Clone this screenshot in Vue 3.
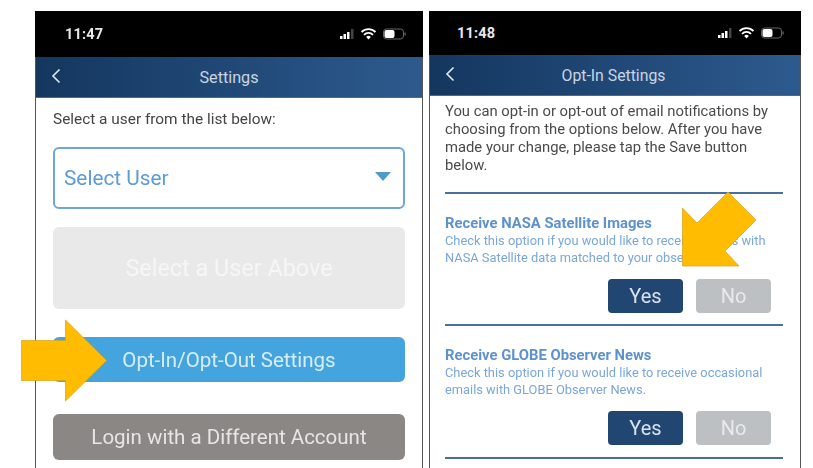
<template>
  <div class="page">
    <!-- left phone -->
    <div class="phone phone-a">
      <div class="status">
        <span class="time">11:47</span>
        <svg class="status-icons" width="66" height="12" viewBox="0 0 66 12">
          <rect x="0" y="8" width="2.5" height="3" fill="#fff" />
          <rect x="3.5" y="6" width="2.5" height="5" fill="#fff" />
          <rect x="7" y="4" width="2.5" height="7" fill="#fff" />
          <rect x="11" y="1" width="2.5" height="10" fill="#444" />
          <path d="M21.5 4a10 10 0 0 1 14 0M24 6.8a6.4 6.4 0 0 1 9 0" fill="none" stroke="#fff" stroke-width="1.8" />
          <path d="M26.2 9a3.2 3.2 0 0 1 4.6 0l-2.3 2.5z" fill="#fff" />
          <rect x="43.5" y="1" width="20" height="10" rx="3" fill="none" stroke="#666" />
          <rect x="44.5" y="2" width="10" height="8" rx="2" fill="#fff" />
          <rect x="64.5" y="4.5" width="1.2" height="3" fill="#666" />
        </svg>
      </div>
      <div class="nav">
        <svg class="back" width="10" height="16" viewBox="0 0 10 16">
          <path d="M8.5 1.5 2 8l6.5 6.5" fill="none" stroke="#e4ebf3" stroke-width="1.6" />
        </svg>
        <span class="nav-title">Settings</span>
      </div>
      <div class="body-a">
        <p class="lead">Select a user from the list below:</p>
        <div class="select">
          <span>Select User</span>
          <i class="caret"></i>
        </div>
        <div class="btn btn-disabled">Select a User Above</div>
        <div class="btn btn-blue">Opt-In/Opt-Out Settings</div>
        <div class="btn btn-gray">Login with a Different Account</div>
      </div>
    </div>

    <!-- right phone -->
    <div class="phone phone-b">
      <div class="status status-b">
        <span class="time">11:48</span>
        <svg class="status-icons" width="66" height="12" viewBox="0 0 66 12">
          <rect x="0" y="8" width="2.5" height="3" fill="#fff" />
          <rect x="3.5" y="6" width="2.5" height="5" fill="#fff" />
          <rect x="7" y="4" width="2.5" height="7" fill="#fff" />
          <rect x="11" y="1" width="2.5" height="10" fill="#444" />
          <path d="M21.5 4a10 10 0 0 1 14 0M24 6.8a6.4 6.4 0 0 1 9 0" fill="none" stroke="#fff" stroke-width="1.8" />
          <path d="M26.2 9a3.2 3.2 0 0 1 4.6 0l-2.3 2.5z" fill="#fff" />
          <rect x="43.5" y="1" width="20" height="10" rx="3" fill="none" stroke="#666" />
          <rect x="44.5" y="2" width="10" height="8" rx="2" fill="#fff" />
          <rect x="64.5" y="4.5" width="1.2" height="3" fill="#666" />
        </svg>
      </div>
      <div class="nav nav-b">
        <svg class="back" width="10" height="16" viewBox="0 0 10 16">
          <path d="M8.5 1.5 2 8l6.5 6.5" fill="none" stroke="#e4ebf3" stroke-width="1.6" />
        </svg>
        <span class="nav-title">Opt-In Settings</span>
      </div>
      <div class="body-b">
        <p class="intro">
          You can opt-in or opt-out of email notifications by<br />
          choosing from the options below. After you have<br />
          made your change, please tap the Save button<br />
          below.
        </p>
        <div v-for="opt in options" :key="opt.title" class="option">
          <div class="opt-title">{{ opt.title }}</div>
          <div class="opt-desc">{{ opt.line1 }}<br />{{ opt.line2 }}</div>
          <div class="choice">
            <div class="yes">Yes</div>
            <div class="no">No</div>
          </div>
        </div>
      </div>
    </div>

    <!-- callout arrows drawn over the screenshots -->
    <svg class="arrow arrow-left" width="87" height="83" viewBox="0 0 87 83">
      <path d="M0.5 21.5H44.5V1L85.5 41.5 44.5 82V61.5H0.5Z" fill="#ffbc00" stroke="#d9a31a" stroke-width=".7" />
    </svg>
    <svg class="arrow arrow-right" width="76" height="76" viewBox="0 0 76 76">
      <path d="M46 1 74 29 43 60 57 75H0.5V17L15 32Z" fill="#ffbc00" stroke="#d9a31a" stroke-width=".7" />
    </svg>
  </div>
</template>

<script setup>
const options = [
  {
    title: 'Receive NASA Satellite Images',
    line1: 'Check this option if you would like to receive emails with',
    line2: 'NASA Satellite data matched to your observations.',
  },
  {
    title: 'Receive GLOBE Observer News',
    line1: 'Check this option if you would like to receive occasional',
    line2: 'emails with GLOBE Observer News.',
  },
]
</script>

<style>
html, body {
  margin: 0;
  background: #fff;
  overflow: hidden;
}
</style>

<style scoped>
.page {
  position: relative;
  display: flex;
  gap: 6px;
  width: 813px;
  height: 468px;
  box-sizing: border-box;
  padding: 11px 0 0 35px;
  overflow: hidden;
  font-family: Roboto, "Liberation Sans", sans-serif;
}

.phone {
  box-sizing: border-box;
  height: 470px;
  border-left: 1px solid #555;
  border-right: 1px solid #555;
  filter: blur(0.6px);
  flex: none;
}
.phone-a { width: 388px; }
.phone-b { width: 372px; }

.status {
  display: flex;
  align-items: center;
  justify-content: space-between;
  height: 46px;
  padding: 0 17px 0 30px;
  margin: 0 -1px;
  background: #000;
}
.status-b { height: 44px; padding: 0 17px 0 28px; }
.time {
  color: #e8e8e8;
  font-size: 14.5px;
  font-weight: 700;
  letter-spacing: 0.2px;
}
.status-icons { flex: none; }

.nav {
  position: relative;
  display: flex;
  align-items: center;
  justify-content: center;
  height: 41px;
  background: linear-gradient(90deg, #14375f, #2d5a8e);
  border-bottom: 1px solid #3f6d9d;
  box-sizing: border-box;
}
.back {
  position: absolute;
  left: 15px;
  top: 11px;
}
.nav-title {
  margin-top: 1px;
  color: #c9d5e2;
  font-size: 16.2px;
}
.nav-b .nav-title {
  font-size: 15.8px;
  margin-right: 3px;
}

.body-a {
  padding: 12px 17px 0 17px;
}
.lead {
  margin: 0 0 18px;
  color: #444;
  font-size: 15.4px;
  line-height: 19px;
}
.select {
  display: flex;
  align-items: center;
  justify-content: space-between;
  box-sizing: border-box;
  height: 62px;
  padding: 0 12px 0 9px;
  border: 2px solid #6fa6d8;
  border-radius: 6px;
  color: #5c9bd6;
  font-size: 20.8px;
  margin-bottom: 18px;
}
.caret {
  width: 0;
  height: 0;
  margin-top: -3px;
  border-left: 8px solid transparent;
  border-right: 8px solid transparent;
  border-top: 9px solid #4d9bc9;
}

.btn {
  display: flex;
  align-items: center;
  justify-content: center;
  border-radius: 6px;
  font-size: 20.5px;
}
.btn-disabled {
  height: 82px;
  margin-bottom: 28px;
  background: #e9e9e9;
  color: #f6f6f6;
  font-size: 23.4px;
}
.btn-blue {
  height: 45px;
  margin-bottom: 32px;
  background: #44a5de;
  color: #d8ecf8;
}
.btn-gray {
  height: 46px;
  background: #8b8785;
  color: #e6e6e6;
}

.body-b {
  padding: 6px 17px 0 15px;
}
.intro {
  margin: 0;
  height: 90px;
  color: #4a4a4a;
  font-size: 14.8px;
  line-height: 18px;
}
.option {
  box-sizing: border-box;
  height: 132.3px;
  padding-top: 20px;
  border-top: 2px solid #4a7099;
}
.opt-title {
  color: #5e92cf;
  font-size: 14.8px;
  font-weight: 700;
  line-height: 18px;
}
.opt-desc {
  color: #7aa6d8;
  font-size: 12.85px;
  line-height: 17px;
  white-space: nowrap;
}
.choice {
  display: flex;
  justify-content: flex-end;
  gap: 13px;
  margin-top: 13px;
  padding-right: 12px;
}
.yes, .no {
  display: flex;
  align-items: center;
  justify-content: center;
  width: 75px;
  height: 34px;
  border-radius: 4px;
  font-size: 20px;
}
.yes {
  background: #214671;
  color: #d9e2ec;
}
.no {
  background: #bcc0c3;
  color: #e8eaeb;
}
.option:last-child {
  height: 134.3px;
  border-bottom: 2px solid #4a7099;
}

.arrow {
  position: absolute;
}
.arrow-left {
  left: 21px;
  top: 319px;
}
.arrow-right {
  left: 682px;
  top: 191px;
}
</style>
